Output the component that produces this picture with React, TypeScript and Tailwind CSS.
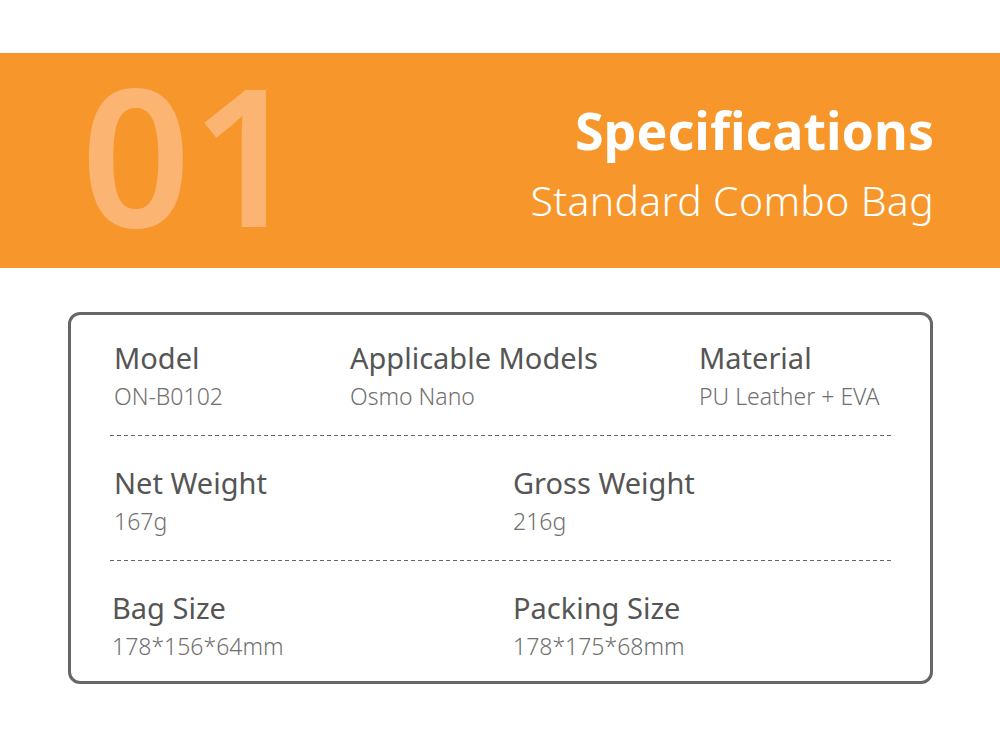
const font = { fontFamily: '"Noto Sans", "Open Sans", sans-serif' };

interface SpecProps {
  label: string;
  value: string;
}

function Spec({ label, value }: SpecProps) {
  return (
    <div className="flex flex-col">
      <span className="text-[29px] leading-[36px] text-[#555555]">{label}</span>
      <span className="mt-[5px] text-[23px] leading-[30px] font-light text-[#707070]">{value}</span>
    </div>
  );
}

function Divider() {
  return (
    <div className="h-px w-full bg-[repeating-linear-gradient(90deg,#666_0_4px,transparent_4px_7px)]" />
  );
}

export default function App() {
  return (
    <div className="w-[1000px] h-[737px] bg-white pt-[53px] overflow-hidden" style={font}>
      {/* Orange banner */}
      <div className="h-[215px] bg-[#f7962a] flex items-start justify-between px-[68px]">
        <span className="mt-[4px] ml-[13px] text-[192px] leading-none font-semibold text-[#fbb471]">
          01
        </span>
        <div className="pt-[47px] -mr-[2px] flex flex-col items-end text-white">
          <span className="text-[52px] leading-[60px] font-bold">Specifications</span>
          <span className="mt-[15px] text-[41px] leading-[50px] font-light tracking-[0.3px]">
            Standard Combo Bag
          </span>
        </div>
      </div>

      {/* Spec card */}
      <div className="mt-[44px] ml-[68px] w-[865px] h-[372px] border-[3px] border-[#666666] rounded-[12px] px-[39px] pt-[25px]">
        <div className="grid grid-cols-[236px_349px_1fr] pl-[4px] pb-[24px]">
          <Spec label="Model" value="ON-B0102" />
          <Spec label="Applicable Models" value="Osmo Nano" />
          <Spec label="Material" value="PU Leather + EVA" />
        </div>
        <Divider />
        <div className="grid grid-cols-[399px_1fr] pl-[4px] pt-[29px] pb-[24px]">
          <Spec label="Net Weight" value="167g" />
          <Spec label="Gross Weight" value="216g" />
        </div>
        <Divider />
        <div className="grid grid-cols-[401px_1fr] pl-[2px] pt-[29px]">
          <Spec label="Bag Size" value="178*156*64mm" />
          <Spec label="Packing Size" value="178*175*68mm" />
        </div>
      </div>
    </div>
  );
}
